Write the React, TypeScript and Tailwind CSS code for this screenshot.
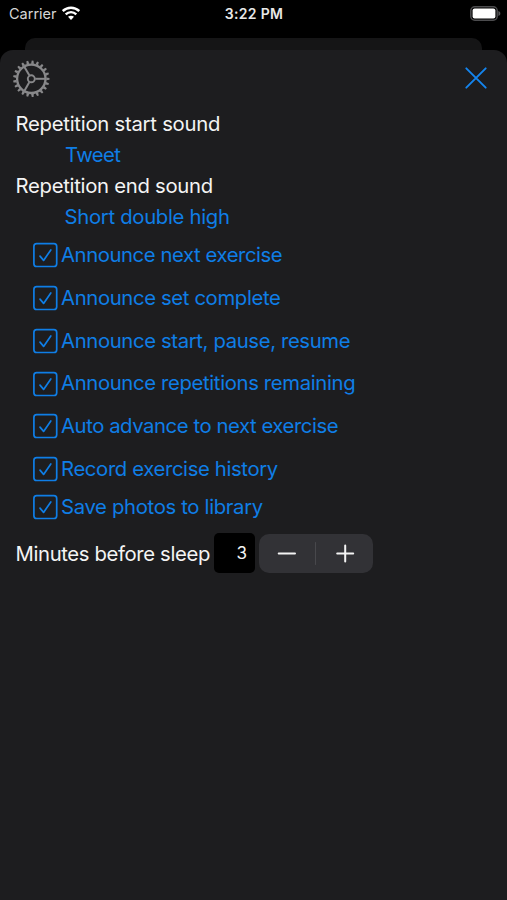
const BLUE = '#0f7ee6';

const options = [
  { label: 'Announce next exercise', row: 'h-[42.75px]', tracking: 'tracking-[-0.42px]' },
  { label: 'Announce set complete', row: 'h-[43px]', tracking: 'tracking-[-0.36px]' },
  { label: 'Announce start, pause, resume', row: 'h-[43px]', tracking: 'tracking-[-0.36px]' },
  { label: 'Announce repetitions remaining', row: 'h-[42.5px]', tracking: 'tracking-[-0.35px]' },
  { label: 'Auto advance to next exercise', row: 'h-[42.5px]', tracking: 'tracking-[-0.43px]' },
  { label: 'Record exercise history', row: 'h-[42.75px]', tracking: 'tracking-[-0.36px]' },
  { label: 'Save photos to library', row: 'h-[34px]', tracking: 'tracking-[-0.33px]' },
];

const TEETH = Array.from({ length: 21 }, (_, i) => (i * 360) / 21);

function Wifi() {
  return (
    <svg className="mb-[2px] ml-[5.5px] h-[14px] w-[18px]" viewBox="0 0 18 14" fill="none" stroke="#fff">
      <path d="M0.7 5.1 C5.4 0.6 12.6 0.6 17.3 5.1" strokeWidth="2.5" />
      <path d="M3.7 8.3 C6.7 5.4 11.3 5.4 14.3 8.3" strokeWidth="2.4" />
      <path d="M9 13.9 L6 10.8 C7.7 9.3 10.3 9.3 12 10.8 Z" fill="#fff" stroke="none" />
    </svg>
  );
}

function Battery() {
  return (
    <svg className="h-[15px] w-[31px]" viewBox="0 0 31 15">
      <rect x="0.8" y="0.8" width="26.4" height="13.4" rx="4" fill="none" stroke="#4c4c4e" strokeWidth="1.5" />
      <rect x="2.6" y="2.5" width="22.8" height="10" rx="2" fill="#fff" />
      <path d="M28.4 5 C31 6 31 9 28.4 10 Z" fill="#59595b" />
    </svg>
  );
}

function Gear() {
  return (
    <svg className="mb-[1px] h-[38px] w-[38px]" viewBox="-19.3 -18.8 38 38" fill="none" stroke="#88888a">
      <circle r="14.2" strokeWidth="2.3" />
      {TEETH.map((a) => (
        <path key={a} d="M15 -1.4 L18.2 -0.9 V0.9 L15 1.4 Z" transform={`rotate(${a})`} fill="#88888a" stroke="none" />
      ))}
      <circle r="3.5" strokeWidth="1.9" />
      {[0, 120, 240].map((a) => (
        <path key={a} d="M4 0 H14" strokeWidth="2" transform={`rotate(${a})`} />
      ))}
    </svg>
  );
}

function CheckBox() {
  return (
    <svg className="h-[26px] w-[26px] shrink-0" viewBox="0 0 26 26" fill="none" stroke={BLUE} strokeLinecap="round" strokeLinejoin="round">
      <rect x="1.9" y="1.7" width="22.8" height="22.8" rx="2.8" strokeWidth="1.7" />
      <path d="M8 14.1 L11.6 18.4 L18.8 7.9" strokeWidth="1.7" />
    </svg>
  );
}

export default function App() {
  return (
    <div className="flex h-[900px] w-[507px] flex-col overflow-hidden bg-black font-['Inter','Liberation_Sans',sans-serif] text-[20.3px] leading-none whitespace-nowrap text-[#f4f4f4]">
      <div className="grid h-[38px] grid-cols-3 items-start px-[9px]">
        <div className="flex h-[27px] items-center text-[14.5px] text-[#d6d6d6]">
          <span className="pt-[1px] tracking-[0px]">Carrier</span>
          <Wifi />
        </div>
        <div className="flex h-[27px] items-center justify-center pl-[1px] text-[14px] font-semibold tracking-[0.3px] text-[#e8e8e8]">3:22 PM</div>
        <div className="-mr-[3px] flex h-[26px] items-center justify-end"><Battery /></div>
      </div>
      <div className="mx-[25px] h-[12px] rounded-t-[10px] bg-[#151516]" />
      <main className="flex flex-1 flex-col rounded-t-[13px] bg-[#1d1d1f]">
        <header className="flex h-[58px] items-center justify-between pr-[19px] pl-[12px]">
          <Gear />
          <svg className="mb-[2px] h-[24px] w-[24px]" viewBox="0 0 24 24" fill="none" stroke="#1485ef" strokeWidth="1.9" strokeLinecap="round">
            <path d="M2.3 2.3 L21.7 21.7 M21.7 2.3 L2.3 21.7" />
          </svg>
        </header>
        <section className="flex flex-col pt-[1px] pl-[15.5px]">
          <div className="flex h-[31px] items-center"><span className="tracking-[-0.25px]">Repetition start sound</span></div>
          <div className="flex h-[31px] items-center pl-[49.5px] text-[#0f7ee6]"><span className="tracking-[-0.6px]">Tweet</span></div>
          <div className="flex h-[31px] items-center"><span className="tracking-[-0.28px]">Repetition end sound</span></div>
          <div className="flex h-[31px] items-center pl-[49px] text-[#0f7ee6]"><span className="tracking-[-0.3px]">Short double high</span></div>
        </section>
        <section className="flex flex-col pt-[0.6px] pl-[32px] text-[#0f7ee6]">
          {options.map((o) => (
            <div key={o.label} className={`flex items-center gap-[3px] ${o.row}`}>
              <CheckBox />
              <span className={o.tracking}>{o.label}</span>
            </div>
          ))}
        </section>
        <section className="flex h-[58px] items-center pl-[15.5px]">
          <span className="w-[198.5px] pt-[2px] tracking-[-0.36px]">Minutes before sleep</span>
          <div className="flex h-[40px] w-[41px] items-center justify-end rounded-[5px] bg-black pt-[1px] pr-[8px] text-[17px]">3</div>
          <div className="ml-[4px] flex h-[39px] w-[114px] items-center rounded-[10px] bg-[#323236]">
            <svg className="h-[39px] w-[114px]" viewBox="0 0 114 39" fill="none" stroke="#f4f4f4" strokeWidth="2" strokeLinecap="round">
              <path d="M19.7 19.5 H36 M78.2 19.5 H94.2 M86.2 11.5 V27.5" />
              <path d="M56.5 8.5 V30.5" stroke="#48484c" strokeWidth="1" />
            </svg>
          </div>
        </section>
      </main>
    </div>
  );
}
